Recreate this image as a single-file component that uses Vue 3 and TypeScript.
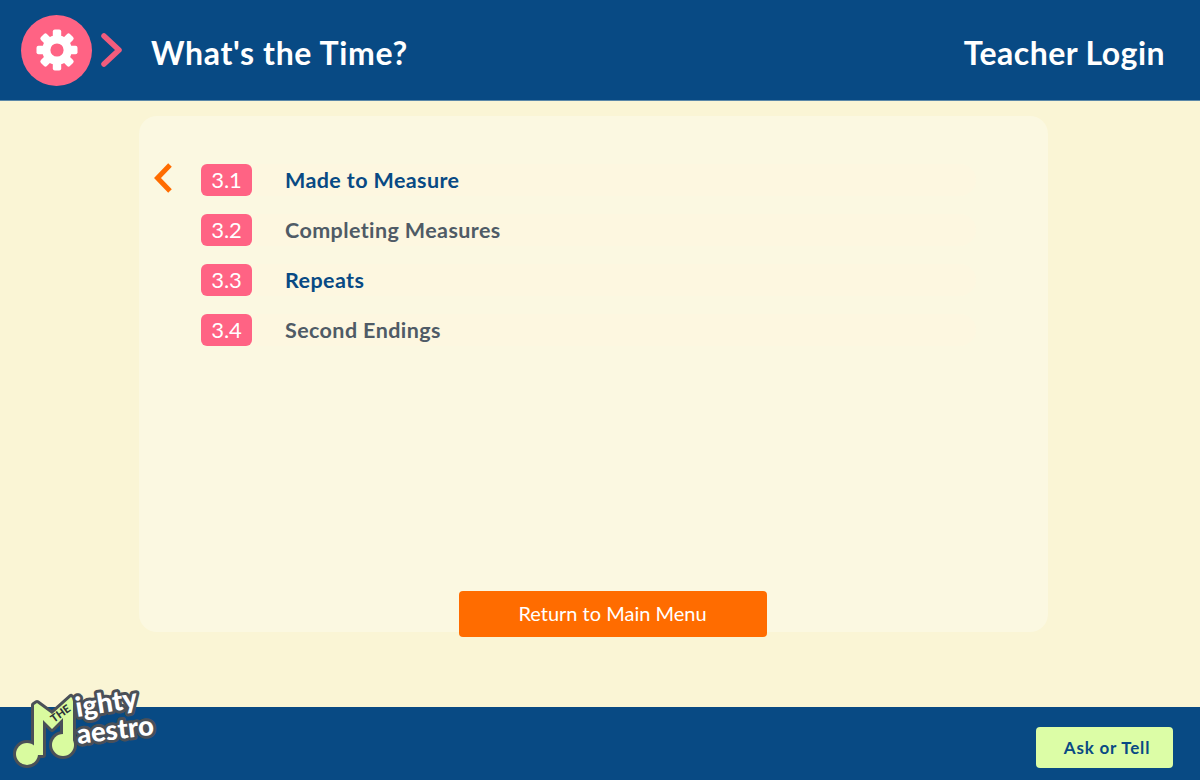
<template>
  <div class="page">
    <header class="topbar">
      <div class="brand">
        <div class="gear-btn">
          <svg width="46" height="46" viewBox="-23 -23 46 46">
            <rect v-for="a in teeth" :key="a" x="-4.2" y="-20.5" width="8.4" height="10" rx="2" fill="#fff" :transform="`rotate(${a})`" />
            <circle r="14.8" fill="#fff" />
            <circle r="6.6" fill="#ff6384" />
          </svg>
        </div>
        <svg class="crumb" width="24" height="34" viewBox="0 0 24 34">
          <polyline points="4,3 19,17 4,31" fill="none" stroke="#f25c7c" stroke-width="5.5" stroke-linecap="round" stroke-linejoin="round" />
        </svg>
        <h1 class="title">What's the Time?</h1>
      </div>
      <a class="login">Teacher Login</a>
    </header>

    <main class="content">
      <section class="card">
        <ul class="lessons">
          <li v-for="(l, i) in lessons" :key="l.num" class="lesson">
            <span class="marker">
              <svg v-if="i === 0" width="20" height="30" viewBox="0 0 20 30">
                <polyline points="17,2 4.5,15 17,28" fill="none" stroke="#ff6c00" stroke-width="5" />
              </svg>
            </span>
            <div class="pill">
              <span class="num">{{ l.num }}</span>
              <span class="name" :class="{ blue: l.blue }">{{ l.name }}</span>
            </div>
          </li>
        </ul>
        <button class="menu-btn">Return to Main Menu</button>
      </section>
    </main>

    <footer class="bottombar">
      <svg class="logo" width="180" height="100" viewBox="0 0 180 100">
        <g stroke="#4a5058" stroke-width="6" stroke-linejoin="round">
          <path :d="notePath" fill="#4a5058" />
          <circle cx="27" cy="74" r="11" fill="#4a5058" />
          <circle cx="63" cy="65" r="11" fill="#4a5058" />
        </g>
        <g fill="#d9fb9f">
          <path :d="notePath" />
          <circle cx="27" cy="74" r="11" />
          <circle cx="63" cy="65" r="11" />
        </g>
        <text class="the" transform="translate(54 43) rotate(-36)">THE</text>
        <g class="logo-word">
          <g transform="translate(77 37) rotate(-9)">
            <text class="w-out">ighty</text>
            <text class="w-in">ighty</text>
          </g>
          <g transform="translate(78 64) rotate(-7)">
            <text class="w-out">aestro</text>
            <text class="w-in">aestro</text>
          </g>
        </g>
      </svg>
      <button class="ask">Ask or Tell</button>
    </footer>
  </div>
</template>

<script setup lang="ts">
const teeth = [0, 45, 90, 135, 180, 225, 270, 315]

const notePath = 'M34 25 L37 23 L52 34 L71 17 L73 19 L73 66 L63 66 L63 38 L52 49 L43 40 L43 75 L34 75 Z'

const lessons = [
  { num: '3.1', name: 'Made to Measure', blue: true },
  { num: '3.2', name: 'Completing Measures', blue: false },
  { num: '3.3', name: 'Repeats', blue: true },
  { num: '3.4', name: 'Second Endings', blue: false },
]
</script>

<style>
html, body { margin: 0; }
</style>

<style scoped>
.page {
  position: relative;
  display: flex;
  flex-direction: column;
  width: 1200px;
  height: 780px;
  overflow: hidden;
  background: #faf5d5;
  font-family: "Lato", "Noto Sans", sans-serif;
}
.topbar {
  flex: none;
  box-sizing: border-box;
  display: flex;
  align-items: center;
  justify-content: space-between;
  padding: 0 35px 0 21px;
  background: #084a84;
  border-bottom: 1px solid #5b88a8;
  height: 101px;
}
.brand { display: flex; align-items: center; }
.gear-btn {
  width: 71px;
  height: 71px;
  border-radius: 50%;
  background: #ff6384;
  display: flex;
  align-items: center;
  justify-content: center;
}
.crumb { margin-left: 8px; }
.title {
  margin: 4px 0 0 27px;
  font-size: 32px;
  font-weight: 700;
  letter-spacing: 0.65px;
  color: #fff;
}
.login {
  margin-top: 4px;
  font-size: 32px;
  font-weight: 700;
  letter-spacing: 0.45px;
  color: #fff;
}
.content {
  flex: 1;
  padding: 15px 0 0 139px;
}
.card {
  width: 908.5px;
  height: 516px;
  box-sizing: border-box;
  padding-top: 48px;
  border-radius: 18px;
  background: #fbf8e1;
  display: flex;
  flex-direction: column;
}
.lessons {
  list-style: none;
  margin: 0;
  padding: 0;
  flex: 1;
  display: flex;
  flex-direction: column;
  gap: 18px;
}
.lesson {
  display: flex;
  align-items: center;
  height: 32px;
}
.marker {
  width: 62px;
  padding: 0 0 4px 14px;
  box-sizing: border-box;
  display: flex;
  align-items: center;
}
.pill {
  width: 775px;
  height: 32px;
  display: flex;
  align-items: center;
  border-radius: 16px;
  background: #fdf7e0;
}
.num {
  width: 51px;
  height: 32px;
  border-radius: 6px;
  background: #ff6384;
  color: #fff;
  font-size: 22px;
  line-height: 31px;
  text-align: center;
}
.name {
  margin: -1px 0 0 33px;
  font-size: 21.5px;
  font-weight: 700;
  letter-spacing: 0.4px;
  color: #4f5b66;
}
.name.blue { color: #084a84; }
.menu-btn {
  align-self: flex-start;
  margin: 0 0 -5px 319.5px;
  padding: 0 0 3px;
  width: 308px;
  height: 46px;
  border: 0;
  border-radius: 4px;
  background: #ff6c00;
  color: #fff;
  font-family: inherit;
  font-size: 20px;
}
.bottombar {
  height: 73px;
  flex: none;
  display: flex;
  align-items: center;
  justify-content: flex-end;
  padding: 7px 27px 0 0;
  box-sizing: border-box;
  background: #084a84;
}
.logo {
  position: absolute;
  left: 0;
  top: 680px;
}
.the {
  font-size: 11px;
  font-weight: 900;
  fill: #2d3338;
}
.logo-word text {
  font-size: 27.5px;
  font-weight: 900;
}
.w-out {
  fill: none;
  stroke: #4a5058;
  stroke-width: 6;
  stroke-linejoin: round;
}
.w-in { fill: #fff; }
.ask {
  width: 137px;
  height: 41px;
  padding: 0 0 0 5px;
  border: 0;
  border-radius: 4px;
  background: #dcfda6;
  color: #084a84;
  font-family: inherit;
  font-size: 17px;
  font-weight: 700;
  letter-spacing: 0.8px;
}
</style>
